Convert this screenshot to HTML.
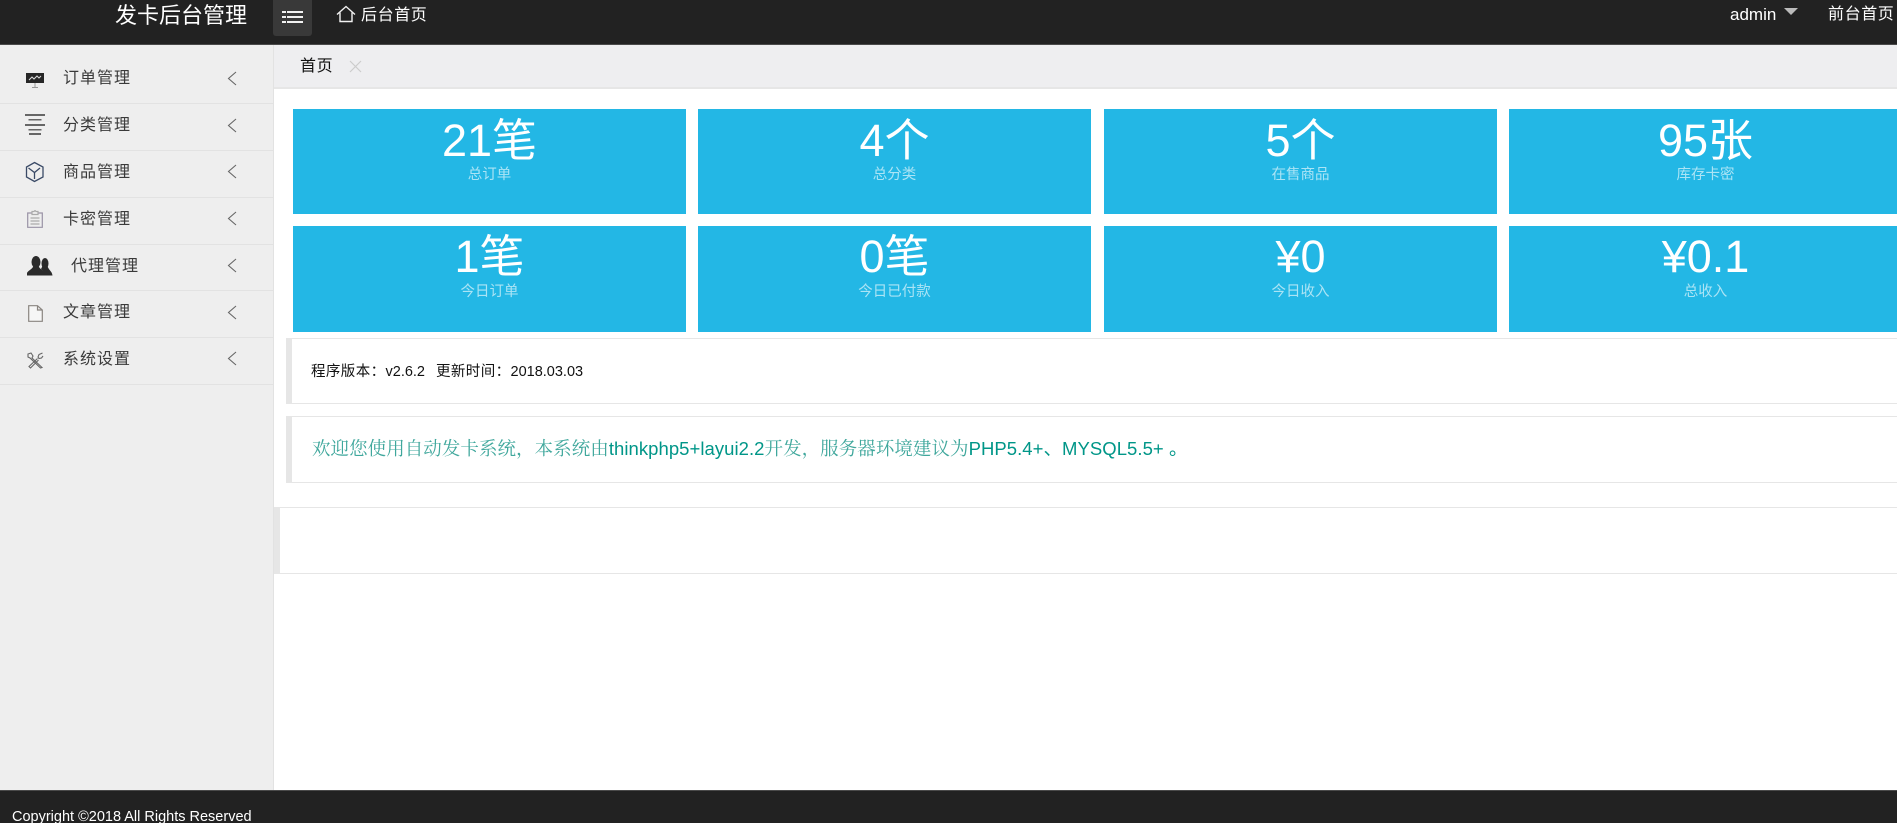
<!DOCTYPE html>
<html lang="zh-CN"><head><meta charset="utf-8"><title>发卡后台管理</title>
<style>
*{box-sizing:border-box;margin:0;padding:0}
html,body{width:1897px;height:823px;overflow:hidden;background:#fff}
body{position:relative;font-family:"Liberation Sans","Noto Sans CJK SC",sans-serif;color:#333}
.a{position:absolute}
.t{position:absolute;white-space:nowrap}
#hd{left:0;top:0;width:1897px;height:45px;background:#222;border-bottom:1px solid #4a4a4a}
#sb{left:0;top:45px;width:274px;height:745px;background:#eee;border-right:1px solid #e2e2e2}
#tb{left:274px;top:45px;width:1623px;height:44px;background:#eeeef0;border-bottom:2px solid #e6e6e6}
#ft{left:0;top:790px;width:1897px;height:33px;background:#222;border-top:1px solid #4a4a4a}
.hl{color:#fff;font-size:16px;letter-spacing:.6px;line-height:24px}
.nv{left:0;width:273px;height:1px;background:#e2e2e2}
.nt{left:63px;font-size:16px;letter-spacing:1px;line-height:24px;color:#3a3a3a}
.cv{left:227px}
.c{position:absolute;width:393px;background:#23b7e5;color:#fff;text-align:center}
.c b{position:absolute;left:0;width:100%;font-weight:400;font-size:45px;line-height:50px;white-space:nowrap}
.c i{position:absolute;left:0;width:100%;font-style:normal;font-size:14.500px;line-height:20px;color:rgba(255,255,255,.62);white-space:nowrap}
.q{position:absolute;background:#fff;border:1px solid #e6e6e6;border-left:6px solid #e6e6e6;border-right:0}
.ls{letter-spacing:.4px}
</style></head><body>

<div class="a" id="hd"></div>
<div class="t" style="left:115px;top:1px;font-size:22px;line-height:30px;color:#fff">发卡后台管理</div>
<div class="a" style="left:273px;top:0;width:39px;height:36px;background:#393939;border-radius:0 0 3px 3px"></div>
<svg class="a" style="left:282px;top:9px" width="22" height="16" fill="#f2f2f2">
<rect x="0" y="2" width="4" height="2"/><rect x="5" y="2" width="16" height="2"/>
<rect x="0" y="7" width="4" height="2"/><rect x="5" y="7" width="16" height="2"/>
<rect x="0" y="12" width="4" height="2"/><rect x="5" y="12" width="16" height="2"/></svg>
<svg class="a" style="left:336px;top:5px" width="20" height="18" fill="none" stroke="#f2f2f2" stroke-width="1.4"><path d="M1 9.500 10 1.500 19 9.500M4 7.500V16.500H16V7.500"/></svg>
<div class="t hl" style="left:361px;top:4px">后台首页</div>
<div class="t" style="left:1730px;top:3px;font-size:17px;line-height:24px;color:#fff">admin</div>
<svg class="a" style="left:1784px;top:8px" width="15" height="9"><path d="M0 0H14L7 7Z" fill="#bbb"/></svg>
<div class="t hl" style="left:1828px;top:3px">前台首页</div>

<div class="a" id="sb"></div>
<div class="a nv" style="top:103px"></div><div class="a nv" style="top:150px"></div><div class="a nv" style="top:197px"></div><div class="a nv" style="top:244px"></div><div class="a nv" style="top:290px"></div><div class="a nv" style="top:337px"></div><div class="a nv" style="top:384px"></div>

<svg class="a" style="left:26px;top:72px" width="19" height="17"><rect x="0" y="1" width="18" height="10" fill="#262626"/><path d="M3 8 6 5 8 7 11 4 13 6 15 4" stroke="#ddd" fill="none"/><path d="M9 11V15M6 15.500H12" stroke="#999" fill="none"/></svg>
<div class="t nt" style="top:67px">订单管理</div>
<svg class="a" style="left:25px;top:113px" width="20" height="22" fill="#666"><rect x="0" y="1" width="20" height="2"/><rect x="3.500" y="6" width="13" height="1.500"/><rect x="0" y="11" width="20" height="2"/><rect x="3.500" y="16" width="13" height="1.500"/><rect x="4" y="20" width="12" height="2"/></svg>
<div class="t nt" style="top:114px">分类管理</div>
<svg class="a" style="left:25px;top:161px" width="20" height="22" fill="none" stroke="#3a4a66" stroke-width="1.300"><path d="M9.500 1.500 18 6V16L9.500 20.500 1.500 16V6ZM3.500 7 9.500 11.500 15 7M9.500 11.500V18"/></svg>
<div class="t nt" style="top:161px">商品管理</div>
<svg class="a" style="left:27px;top:210px" width="16" height="18" fill="none" stroke="#9a93a6" stroke-width="1.200"><path d="M5 3H.7V17.300H15.300V3H11"/><path d="M5 4.500V1.500H7L8 .5 9 1.500H11V4.500ZM3.500 8H12.500M3.500 11H12.500M3.500 14H12.500" stroke="#aaa"/></svg>
<div class="t nt" style="top:208px">卡密管理</div>
<svg class="a" style="left:27px;top:256px" width="26" height="20" fill="#2b2b2b"><ellipse cx="9" cy="6" rx="4.500" ry="6"/><path d="M0 19.500V17C1 14.500 5 13.500 6.500 10H11.500C13 13.500 17 14.500 18 17V19.500Z"/><ellipse cx="18" cy="7.500" rx="3.500" ry="5.500"/><path d="M15.500 10H20.500C21.500 14 25 15 25.500 19.500H17V16L14 13Z"/></svg>
<div class="t nt" style="left:71px;top:255px">代理管理</div>
<svg class="a" style="left:28px;top:305px" width="15" height="17" fill="#f6f6f6" stroke="#8a8580" stroke-width="1.200"><path d="M.7.700H9.500L14.300 5V16.300H.7ZM9.500 .7V5H14.300"/></svg>
<div class="t nt" style="top:301px">文章管理</div>
<svg class="a" style="left:27px;top:352px" width="17" height="17" fill="none" stroke="#666" stroke-width="1.100"><path d="M1 2 4 1 6 4 5 6 15 15.500 13.500 16 3 6 1 5ZM15.500 1 12 2.500 11 5 12 6.500 14.500 6 16 4M10.500 6.500 2 14.500 3.500 16 11.500 8"/></svg>
<div class="t nt" style="top:348px">系统设置</div>

<svg class="a cv" style="top:70px" width="12" height="17" fill="none" stroke="#666" stroke-width="1.100"><path d="M9 2 1.500 8.500 9 15"/></svg>
<svg class="a cv" style="top:117px" width="12" height="17" fill="none" stroke="#666" stroke-width="1.100"><path d="M9 2 1.500 8.500 9 15"/></svg>
<svg class="a cv" style="top:163px" width="12" height="17" fill="none" stroke="#666" stroke-width="1.100"><path d="M9 2 1.500 8.500 9 15"/></svg>
<svg class="a cv" style="top:210px" width="12" height="17" fill="none" stroke="#666" stroke-width="1.100"><path d="M9 2 1.500 8.500 9 15"/></svg>
<svg class="a cv" style="top:257px" width="12" height="17" fill="none" stroke="#666" stroke-width="1.100"><path d="M9 2 1.500 8.500 9 15"/></svg>
<svg class="a cv" style="top:304px" width="12" height="17" fill="none" stroke="#666" stroke-width="1.100"><path d="M9 2 1.500 8.500 9 15"/></svg>
<svg class="a cv" style="top:350px" width="12" height="17" fill="none" stroke="#666" stroke-width="1.100"><path d="M9 2 1.500 8.500 9 15"/></svg>

<div class="a" id="tb"></div>
<div class="t" style="left:300px;top:55px;font-size:16px;letter-spacing:.6px;line-height:24px;color:#111">首页</div>
<svg class="a" style="left:349px;top:60px" width="13" height="13" stroke="#ccc" stroke-width="1.200"><path d="M1 1 12 12M12 1 1 12"/></svg>

<div class="c" style="left:293px;top:109px;height:105px"><b style="top:7px">21笔</b><i style="top:56px">总订单</i></div>
<div class="c" style="left:698px;top:109px;height:105px"><b style="top:7px">4个</b><i style="top:56px">总分类</i></div>
<div class="c" style="left:1104px;top:109px;height:105px"><b style="top:7px">5个</b><i style="top:56px">在售商品</i></div>
<div class="c" style="left:1509px;top:109px;height:105px"><b style="top:7px">95张</b><i style="top:56px">库存卡密</i></div>
<div class="c" style="left:293px;top:226px;height:106px"><b style="top:6px">1笔</b><i style="top:56px">今日订单</i></div>
<div class="c" style="left:698px;top:226px;height:106px"><b style="top:6px">0笔</b><i style="top:56px">今日已付款</i></div>
<div class="c" style="left:1104px;top:226px;height:106px"><b style="top:6px">¥0</b><i style="top:56px">今日收入</i></div>
<div class="c" style="left:1509px;top:226px;height:106px"><b style="top:6px">¥0.1</b><i style="top:56px">总收入</i></div>

<div class="q" style="left:286px;top:338px;width:1611px;height:66px"></div>
<div class="t" style="left:311px;top:362px;font-size:14.500px;line-height:20px;color:#111"><span class="ls">程序版本：</span>v2.6.2</div>
<div class="t" style="left:436px;top:362px;font-size:14.500px;line-height:20px;color:#111"><span class="ls">更新时间：</span>2018.03.03</div>

<div class="q" style="left:286px;top:416px;width:1611px;height:67px"></div>
<div class="t" style="left:312px;top:436px;font-size:18.500px;line-height:26px;color:#009688;letter-spacing:.05px"><span style="font-family:'Liberation Sans','Noto Serif CJK SC',serif;color:#3fa79c">欢迎您使用自动发卡系统，本系统由</span>thinkphp5+layui2.2<span style="font-family:'Liberation Sans','Noto Serif CJK SC',serif;color:#3fa79c">开发，服务器环境建议为</span>PHP5.4+、MYSQL5.5+ 。</div>

<div class="q" style="left:274px;top:507px;width:1623px;height:67px"></div>

<div class="a" id="ft"></div>
<div class="t" style="left:12px;top:806px;font-size:14.500px;line-height:22px;color:#fff">Copyright ©2018 All Rights Reserved</div>
</body></html>
